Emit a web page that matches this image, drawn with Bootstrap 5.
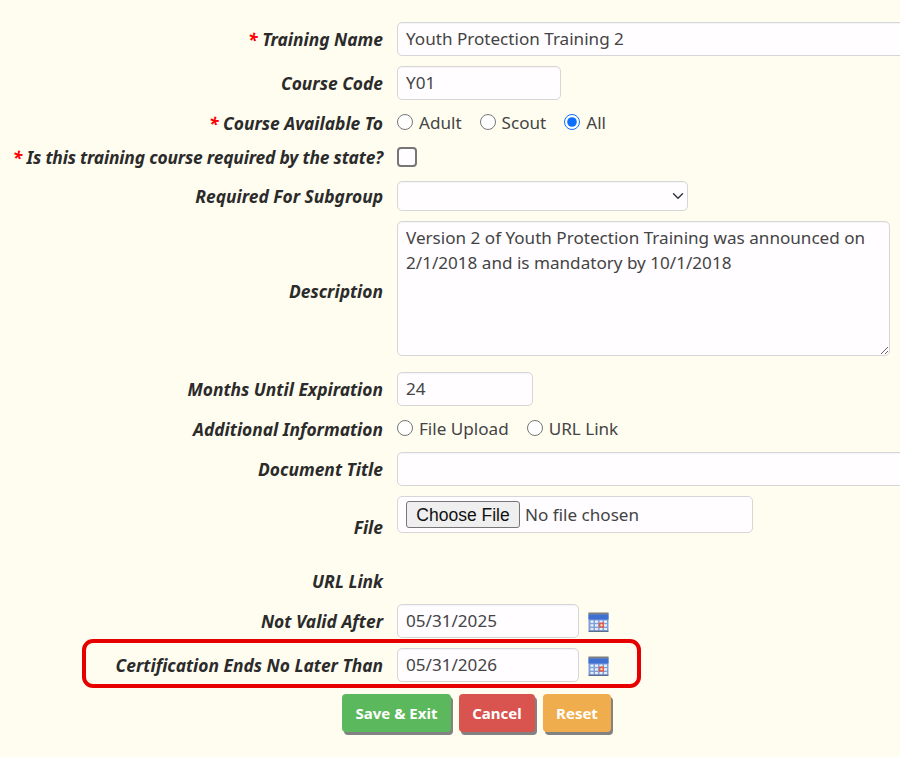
<!DOCTYPE html>
<html lang="en"><head><meta charset="utf-8"><title>Training</title>
<link href="https://cdn.jsdelivr.net/npm/bootstrap@5.3.0/dist/css/bootstrap.min.css" rel="stylesheet">
<style>
html,body{height:757px;overflow:hidden}
body{background:#fffdf0;font-family:"Noto Sans","Open Sans",sans-serif;font-size:17.1px;color:#333;padding-top:22px}
.frm{width:900px;overflow:hidden;padding-bottom:8px}
.frow{display:flex;align-items:center;gap:14px;position:relative}
.lbl{width:383px;flex:none;text-align:right;font-weight:700;font-style:italic;color:#2b2b2b;white-space:nowrap;margin:0;font-size:17.4px}
.lbl i{color:#f00;font-style:italic}
.lbl-tight{letter-spacing:-.18px}
.lbl-desc{padding-top:6px}
.lbl.lbl-file{align-self:flex-start;margin-top:18px;margin-bottom:-10px}
.form-control,.form-select{background-color:#fffdff;border:1px solid #d6d6d6;border-radius:5px;color:#444;font-size:17.1px;height:34px;padding:3px 8px 5px;box-shadow:inset 0 1px 1px rgba(0,0,0,.04)}
.w-full{width:520px;flex:none}
.w-164{width:164px}.w-136{width:136px}.w-182{width:182px}
.form-select{width:291px;height:30px;background-position:right 2px center;background-size:14px 12px}
textarea.form-control{width:493px;height:135px;padding:3px 8px;line-height:25px}
.optset{padding-top:2px}
.opt{display:flex;align-items:center;gap:6px;margin-right:18px;color:#444}
.opt input{width:16px;height:16px;margin:0 0 2px;accent-color:#0d6efd}
.ck{width:20px;height:20px;margin:0;border:2px solid #767676;border-radius:4px;appearance:none;background:#fffdff;display:block}
.fbox{width:356px;height:37px;border:1px solid #d6d6d6;border-radius:5px;background:#fffdff;display:flex;align-items:center;padding:0 8px;color:#444;gap:5px}
.fbtn{font-family:"Liberation Sans",sans-serif;font-size:17.5px;background:#efefef;border:1px solid #767676;border-radius:3px;color:#111;height:27px;width:114px;padding:0;line-height:24px}
.cal{display:block;margin-left:-5px;margin-top:2px}
.mark-box{position:absolute;left:82px;top:-9px;width:559px;height:49px;border:4px solid #e60000;border-radius:11px;pointer-events:none}
.acts{display:flex;gap:8px;margin-left:342px;margin-top:12px}
.btn.bt{border:0;color:#fff;font-weight:700;font-size:15px;height:38px;border-radius:4px;box-shadow:2px 3px 0 #828282;padding:0}
.btn.bt-s{background:#5cb85c;width:109px}.btn.bt-c{background:#d9534f;width:76px}.btn.bt-r{background:#f0ad4e;width:68px}
.m10{margin-top:10px}
.frow-r1{height:44px}
.frow-r2{height:24px;margin-top:1px}
.frow-r3{margin-top:12px}
.frow-r4{margin-top:16px;height:34px}
.frow-r8{margin-top:2px}
.frow-r6{height:24px;margin-top:36px}
.frow-r7{margin-top:11px}
</style></head><body>
<svg width="0" height="0" class="d-block"><defs><symbol id="cal" viewBox="0 0 20 20">
<rect x="0" y="1" width="20" height="18" fill="#7f9fd8"/><rect x="0" y="0.5" width="20" height="2" fill="#7d7d7d"/><rect x="0" y="2.5" width="20" height="5" fill="#3f6fd0"/>
<g fill="#e6eefb"><rect x="2" y="8.5" width="3" height="2.4"/><rect x="6.5" y="8.5" width="3" height="2.4"/><rect x="11" y="8.5" width="3" height="2.4"/><rect x="15.5" y="8.5" width="3" height="2.4"/><rect x="2" y="12.2" width="3" height="2.4"/><rect x="6.5" y="12.2" width="3" height="2.4"/><rect x="15.5" y="12.2" width="3" height="2.4"/><rect x="2" y="16" width="3" height="2.2"/><rect x="6.5" y="16" width="3" height="2.2"/><rect x="11" y="16" width="3" height="2.2"/><rect x="15.5" y="16" width="3" height="2.2"/></g>
<rect x="10.5" y="10.5" width="5" height="5.2" fill="#e8593c"/><rect x="12" y="12.2" width="2" height="2" fill="#f6e9e0"/><rect x="0" y="18.7" width="20" height="1.3" fill="#5b6f8f"/>
</symbol></defs></svg>
<form class="frm">
<div class="frow"><label class="lbl"><i>*</i> Training Name</label><input class="form-control w-full" value="Youth Protection Training 2"></div>
<div class="frow m10"><label class="lbl">Course Code</label><input class="form-control w-164" value="Y01"></div>
<div class="frow frow-r1"><label class="lbl optset"><i>*</i> Course Available To</label><div class="d-flex optset"><label class="opt"><input type="radio" name="a">Adult</label><label class="opt"><input type="radio" name="a">Scout</label><label class="opt"><input type="radio" name="a" checked>All</label></div></div>
<div class="frow frow-r2"><label class="lbl lbl-tight"><i>*</i> Is this training course required by the state?</label><input type="checkbox" class="ck"></div>
<div class="frow frow-r3"><label class="lbl">Required For Subgroup</label><select class="form-select"><option></option></select></div>
<div class="frow m10"><label class="lbl lbl-desc">Description</label><textarea class="form-control">Version 2 of Youth Protection Training was announced on 2/1/2018 and is mandatory by 10/1/2018</textarea></div>
<div class="frow frow-r4"><label class="lbl">Months Until Expiration</label><input class="form-control w-136" value="24"></div>
<div class="frow frow-r1"><label class="lbl optset">Additional Information</label><div class="d-flex optset"><label class="opt"><input type="radio" name="b">File Upload</label><label class="opt"><input type="radio" name="b">URL Link</label></div></div>
<div class="frow frow-r8"><label class="lbl">Document Title</label><input class="form-control w-full"></div>
<div class="frow m10"><label class="lbl lbl-file">File</label><div class="fbox"><button type="button" class="fbtn">Choose File</button><span>No file chosen</span></div></div>
<div class="frow frow-r6"><label class="lbl">URL Link</label></div>
<div class="frow frow-r7"><label class="lbl">Not Valid After</label><input class="form-control w-182" value="05/31/2025"><svg class="cal" width="21" height="20"><use href="#cal"/></svg></div>
<div class="frow m10"><span class="mark-box"></span><label class="lbl">Certification Ends No Later Than</label><input class="form-control w-182" value="05/31/2026"><svg class="cal" width="21" height="20"><use href="#cal"/></svg></div>
<div class="acts"><button type="button" class="btn bt bt-s">Save &amp; Exit</button><button type="button" class="btn bt bt-c">Cancel</button><button type="button" class="btn bt bt-r">Reset</button></div>
</form>
</body></html>
